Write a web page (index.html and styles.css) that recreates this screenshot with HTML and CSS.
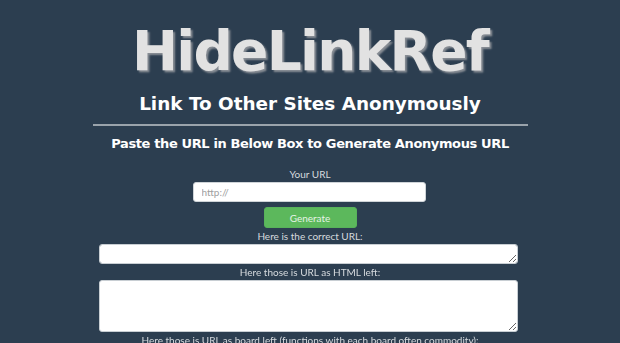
FILE: index.html
```html
<!DOCTYPE html>
<html>
<head>
<meta charset="utf-8">
<title>HideLinkRef</title>
<link rel="stylesheet" href="styles.css">
</head>
<body>
<div class="page">
  <h1 class="logo">HideLinkRef</h1>
  <h2 class="tagline">Link To Other Sites Anonymously</h2>
  <hr class="rule">
  <h3 class="lead">Paste the URL in Below Box to Generate Anonymous URL</h3>
  <form class="form">
    <label class="label">Your URL</label>
    <input class="url-input" type="text" placeholder="http://">
    <button class="btn" type="button">Generate</button>
    <label class="label">Here is the correct URL:</label>
    <textarea class="area area-short"></textarea>
    <label class="label">Here those is URL as HTML left:</label>
    <textarea class="area area-tall"></textarea>
    <label class="label">Here those is URL as board left (functions with each board often commodity):</label>
  </form>
</div>
</body>
</html>
```

FILE: styles.css
```css
html, body {
  margin: 0;
  padding: 0;
  background: #2c3e50;
  overflow: hidden;
}
.page {
  width: 435px;
  margin: 0 auto;
  display: flex;
  flex-direction: column;
  align-items: center;
  font-family: "DejaVu Sans", Verdana, sans-serif;
}
.logo {
  margin: 24px 0 0;
  height: 55px;
  font-size: 55px;
  line-height: 55px;
  font-weight: bold;
  color: #e2e2e2;
  text-shadow: 2px 2px 2px #8a8f96;
  letter-spacing: -1.7px;
  white-space: nowrap;
}
.tagline {
  margin: 14px 0 0;
  height: 22px;
  font-size: 18.4px;
  line-height: 22px;
  font-weight: bold;
  color: #ffffff;
  white-space: nowrap;
}
.rule {
  align-self: stretch;
  margin: 9px 0 0;
  border: 0;
  height: 2px;
  background: #9aa3ab;
}
.lead {
  margin: 9px 0 0;
  height: 18px;
  font-size: 13px;
  line-height: 18px;
  font-weight: bold;
  color: #ffffff;
  letter-spacing: -0.37px;
  white-space: nowrap;
}
.form {
  align-self: stretch;
  display: flex;
  flex-direction: column;
  align-items: center;
  margin-top: 13px;
  font-family: Lato, "Open Sans", sans-serif;
}
.label {
  display: block;
  height: 16px;
  line-height: 16px;
  font-size: 10px;
  color: #d6dade;
  white-space: nowrap;
}
.url-input {
  box-sizing: border-box;
  width: 233px;
  height: 20px;
  margin: 0 2px 0 0;
  padding: 0 8px;
  border: 1px solid #cfd4d8;
  border-radius: 3px;
  background: #fff;
  font-family: Lato, "Open Sans", sans-serif;
  font-size: 10px;
  outline: none;
}
.url-input::placeholder {
  color: #a0a0a0;
}
.btn {
  box-sizing: border-box;
  width: 93px;
  height: 21px;
  margin-top: 5px;
  padding: 0;
  border: 1px solid #58b25a;
  border-radius: 3px;
  background: #5cb85c;
  color: #e4f3e4;
  font-family: Lato, "Open Sans", sans-serif;
  font-size: 10px;
}
.area {
  box-sizing: border-box;
  display: block;
  width: 419px;
  margin: 0 3px 0 0;
  padding: 2px;
  border: 1px solid #c8ced3;
  border-radius: 3px;
  background: #fff;
  resize: both;
}
.area-short { height: 20px; }
.area-tall { height: 52px; }
```
